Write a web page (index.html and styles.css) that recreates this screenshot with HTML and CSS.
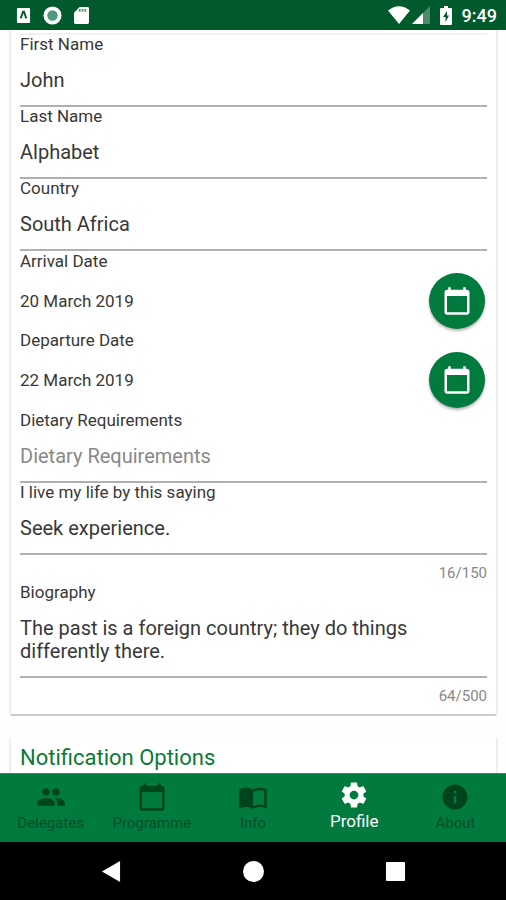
FILE: index.html
```html
<!DOCTYPE html>
<html lang="en">
<head>
<meta charset="utf-8">
<meta name="viewport" content="width=device-width, initial-scale=1">
<title>Profile</title>
<link rel="stylesheet" href="styles.css">
</head>
<body>
<svg class="defs" aria-hidden="true">
  <symbol id="calendar" viewBox="0 0 24 24"><path d="M20 3h-1V1h-2v2H7V1H5v2H4c-1.1 0-2 .9-2 2v16c0 1.1.9 2 2 2h16c1.1 0 2-.9 2-2V5c0-1.1-.9-2-2-2zm0 18H4V8h16v13z"/></symbol>
</svg>
<header class="status">
  <div class="status-group">
    <svg class="status-icon" viewBox="0 0 16 20"><path fill="#fff" d="M2 2h12a1 1 0 0 1 1 1v14a1 1 0 0 1-1 1H2a1 1 0 0 1-1-1V3a1 1 0 0 1 1-1z"/><path fill="none" stroke="#005a2c" stroke-width="2" d="M5 13l2.500-7h1L11 13"/></svg>
    <svg class="status-icon round" viewBox="0 0 20 20"><circle cx="10" cy="10" r="7.500" fill="#4f9a80" stroke="#fff" stroke-width="4"/></svg>
    <svg class="status-icon" viewBox="0 0 16 20"><path fill="#fff" d="M6 1h8.500A1.500 1.500 0 0 1 16 2.500v15a1.500 1.500 0 0 1-1.500 1.500h-13A1.500 1.500 0 0 1 0 17.500V7z"/><path stroke="#5c9678" stroke-width="2" d="M6 3v3M9 3v3M12 3v3"/></svg>
  </div>
  <div class="status-group right">
    <svg class="wifi" viewBox="0 0 22 18"><path fill="#fff" d="M0 4.500Q11-4 22 4.500L11 18z"/></svg>
    <svg class="signal" viewBox="0 0 18 18"><path fill="#4c8c6b" d="M18 0v18H0z"/><path fill="#fff" d="M11 7v11H0z"/></svg>
    <svg class="battery" viewBox="0 0 12 19"><path fill="#fff" d="M4 0h4v2h3a1 1 0 0 1 1 1v15a1 1 0 0 1-1 1H1a1 1 0 0 1-1-1V3a1 1 0 0 1 1-1h3z"/><path fill="#005a2c" d="M7 5L3 11h2.500v5L9 9.500H7z"/></svg>
    <span class="clock">9:49</span>
  </div>
</header>
<main class="content">
  <form class="card details">
    <div class="field"><label for="first">First Name</label><input id="first" type="text" value="John"></div>
    <div class="field"><label for="last">Last Name</label><input id="last" type="text" value="Alphabet"></div>
    <div class="field"><label for="country">Country</label><input id="country" type="text" value="South Africa"></div>
    <div class="dates">
      <div class="date-label">Arrival Date</div>
      <div class="date-row"><span>20 March 2019</span><button type="button" class="fab" aria-label="Choose arrival date"><svg><use href="#calendar"/></svg></button></div>
      <div class="date-label">Departure Date</div>
      <div class="date-row"><span>22 March 2019</span><button type="button" class="fab" aria-label="Choose departure date"><svg><use href="#calendar"/></svg></button></div>
    </div>
    <div class="field"><label for="diet">Dietary Requirements</label><input id="diet" type="text" placeholder="Dietary Requirements"></div>
    <div class="field"><label for="saying">I live my life by this saying</label><input id="saying" type="text" maxlength="150" value="Seek experience."></div>
    <div class="counter">16/150</div>
    <div class="field"><label for="bio">Biography</label><textarea id="bio" rows="2" maxlength="500">The past is a foreign country; they do things differently there.</textarea></div>
    <div class="counter">64/500</div>
  </form>
  <section class="card options"><h2>Notification Options</h2></section>
</main>
<nav class="tabs">
  <a href="#delegates"><svg viewBox="0 0 24 24"><path d="M16 11c1.660 0 2.990-1.340 2.990-3S17.660 5 16 5s-3 1.340-3 3 1.340 3 3 3zm-8 0c1.660 0 2.990-1.340 2.990-3S9.660 5 8 5 5 6.340 5 8s1.340 3 3 3zm0 2c-2.330 0-7 1.170-7 3.500V19h14v-2.500c0-2.330-4.670-3.500-7-3.500zm8 0c-.29 0-.62.020-.97.050 1.160.840 1.970 1.970 1.970 3.450V19h6v-2.500c0-2.330-4.670-3.500-7-3.500z"/></svg><span>Delegates</span></a>
  <a href="#programme"><svg><use href="#calendar"/></svg><span>Programme</span></a>
  <a href="#info"><svg viewBox="0 0 24 24"><path d="M21 5c-1.110-.35-2.330-.5-3.500-.5-1.950 0-4.050.4-5.500 1.500-1.450-1.100-3.550-1.500-5.500-1.500S2.450 4.900 1 6v14.650c0 .25.25.5.5.5.1 0 .15-.050.25-.050C3.100 20.450 5.050 20 6.500 20c1.950 0 4.050.4 5.500 1.500 1.350-.85 3.800-1.500 5.500-1.500 1.650 0 3.350.3 4.750 1.050.1.050.15.050.25.050.25 0 .5-.25.5-.5V6c-.6-.45-1.250-.75-2-1zm0 13.500c-1.100-.35-2.300-.5-3.500-.5-1.700 0-4.150.65-5.500 1.500V8c1.350-.85 3.800-1.500 5.500-1.500 1.200 0 2.400.15 3.500.5v11.500z"/></svg><span>Info</span></a>
  <a href="#profile" class="active" aria-current="page"><svg viewBox="0 0 24 24"><path d="M19.430 12.980c.040-.32.070-.64.070-.98s-.030-.66-.070-.98l2.110-1.650c.19-.15.24-.42.120-.64l-2-3.460c-.12-.22-.39-.3-.61-.22l-2.490 1c-.52-.4-1.080-.73-1.690-.98l-.38-2.650C14.460 2.180 14.250 2 14 2h-4c-.25 0-.46.18-.49.42l-.38 2.650c-.61.25-1.170.59-1.690.98l-2.490-1c-.23-.09-.49 0-.61.22l-2 3.460c-.13.22-.07.49.12.64l2.110 1.650c-.04.32-.07.65-.07.98s.03.66.07.98l-2.110 1.650c-.19.15-.24.42-.12.64l2 3.460c.12.22.39.3.61.22l2.490-1c.52.4 1.080.73 1.690.98l.38 2.650c.03.24.24.42.49.42h4c.25 0 .46-.18.49-.42l.38-2.650c.61-.25 1.170-.59 1.690-.98l2.490 1c.23.09.49 0 .61-.22l2-3.460c.12-.22.07-.49-.12-.64l-2.110-1.650zM12 15.500c-1.930 0-3.500-1.570-3.500-3.500s1.570-3.500 3.500-3.500 3.500 1.570 3.500 3.500-1.570 3.500-3.500 3.500z"/></svg><span>Profile</span></a>
  <a href="#about"><svg viewBox="0 0 24 24"><path d="M12 2C6.480 2 2 6.480 2 12s4.480 10 10 10 10-4.480 10-10S17.520 2 12 2zm1 15h-2v-6h2v6zm0-8h-2V7h2v2z"/></svg><span>About</span></a>
</nav>
<footer class="system">
  <button type="button" aria-label="Back"><svg viewBox="0 0 22 22"><path d="M20 0v22L1 11z"/></svg></button>
  <button type="button" aria-label="Home"><svg viewBox="0 0 22 22"><circle cx="11" cy="11" r="11"/></svg></button>
  <button type="button" aria-label="Recent apps"><svg viewBox="0 0 22 22"><rect x="1" y="1" width="20" height="20" rx="1"/></svg></button>
</footer>
</body>
</html>
```
FILE: styles.css
```css
* { box-sizing: border-box; }
body {
  margin: 0;
  height: 100vh;
  display: flex;
  flex-direction: column;
  background: #fefefe;
  color: #383838;
  font-family: Roboto, "Liberation Sans", sans-serif;
  font-size: 17px;
}
button, input, textarea { font: inherit; color: inherit; border: 0; margin: 0; }
.defs { position: absolute; width: 0; height: 0; }

.status {
  flex: none;
  height: 30px;
  padding: 0 9px 0 16px;
  display: flex;
  align-items: center;
  justify-content: space-between;
  background: #005a2c;
  color: #fff;
}
.status-group { display: flex; align-items: center; gap: 12px; }
.status-group.right { gap: 2px; }
.status-icon { width: 15px; height: 19px; }
.status-icon.round { width: 19px; }
.wifi { width: 22px; height: 18px; }
.signal { width: 18px; height: 18px; }
.battery { width: 12px; height: 19px; margin: 0 8px; }
.clock { font-size: 18px; font-weight: 500; }

.content { flex: 1; min-height: 0; overflow: hidden; padding: 0 8px 0 9px; }
.card {
  background: #fff;
  border: solid #eee;
  border-width: 0 2px;
  padding: 0 9px;
}
.details {
  padding-top: 5px;
  padding-bottom: 8px;
  border-bottom: 2px solid #ccc;
  border-radius: 0 0 4px 4px;
  background: linear-gradient(#f2f2f2, #f2f2f2) center 3px / calc(100% - 18px) 2px no-repeat #fff;
}
.field { display: flex; flex-direction: column; }
.field label, .date-label { line-height: 18px; }
.field input, .field textarea {
  width: 100%;
  padding: 0;
  border-bottom: 2px solid #b0b0b0;
  border-radius: 0;
  background: transparent;
  font-size: 20px;
  outline: 0;
}
.field input { height: 54px; padding-top: 2px; }
.field textarea {
  height: 77px;
  padding: 16px 0 13px;
  line-height: 23px;
  resize: none;
  overflow: hidden;
}
.field input::placeholder { color: #888; opacity: 1; }
.dates { padding: 1px 0; }
.date-row {
  height: 61px;
  display: flex;
  align-items: center;
  justify-content: space-between;
}
.fab {
  width: 56px;
  height: 56px;
  margin-right: 2px;
  padding: 0;
  display: grid;
  place-items: center;
  border-radius: 50%;
  background: #007a3d;
  box-shadow: 0 2px 3px rgba(0, 0, 0, .3);
}
.fab svg { width: 30px; height: 30px; fill: #fff; }
.counter {
  padding-top: 8px;
  font-size: 15px;
  line-height: 20px;
  text-align: right;
  color: #888;
}
.options { margin-top: 22px; padding-top: 6px; padding-bottom: 20px; }
.options h2 {
  margin: 0;
  font-size: 22px;
  line-height: 28px;
  font-weight: 400;
  color: #0b7a35;
}

.tabs {
  flex: none;
  height: 69px;
  display: flex;
  background: #007a3d;
  border-top: 1px solid #2c8d5b;
}
.tabs a {
  flex: 1;
  display: flex;
  flex-direction: column;
  align-items: center;
  padding-top: 8px;
  color: #004f26;
  text-decoration: none;
  font-size: 15px;
  line-height: 22px;
}
.tabs svg { width: 30px; height: 30px; fill: #00441c; }
.tabs .active { padding-top: 6px; color: #fff; font-size: 17px; }
.tabs .active svg { fill: #fff; }

.system {
  flex: none;
  height: 58px;
  padding: 0 40px;
  display: flex;
  background: #000;
}
.system button {
  flex: 1;
  padding: 0;
  display: grid;
  place-items: center;
  background: none;
}
.system svg { width: 21px; height: 21px; fill: #fff; }
```
